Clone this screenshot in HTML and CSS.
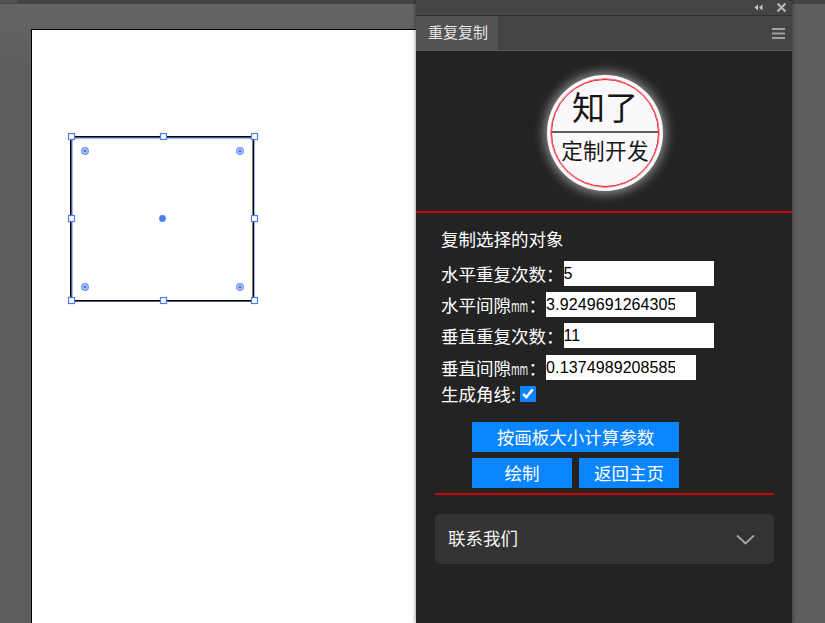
FILE: index.html
```html
<!DOCTYPE html>
<html lang="zh-CN">
<head>
<meta charset="utf-8">
<title>重复复制</title>
<link rel="stylesheet" href="styles.css">
</head>
<body>
<div class="app">
  <div class="appbar"><span class="appbar-tab"></span></div>
  <div class="workspace">
    <main class="canvas">
      <div class="artboard"></div>
      <svg class="selection" width="415" height="623" viewBox="0 0 415 623">
        <rect class="sel-blue" x="71.5" y="137.5" width="182" height="163"/>
        <rect class="sel-black" x="70.75" y="136.75" width="182.5" height="164"/>
        <g class="widget">
          <circle cx="85" cy="151" r="3.3"/><circle cx="240" cy="151" r="3.3"/>
          <circle cx="85" cy="287" r="3.3"/><circle cx="240" cy="287" r="3.3"/>
        </g>
        <g class="widget-dot">
          <circle cx="85" cy="151" r="1.8"/><circle cx="240" cy="151" r="1.8"/>
          <circle cx="85" cy="287" r="1.8"/><circle cx="240" cy="287" r="1.8"/>
          <circle cx="162.5" cy="218.5" r="3.4"/>
        </g>
        <g class="handle">
          <rect x="68.5" y="133.5" width="6" height="6"/><rect x="160.5" y="133.5" width="6" height="6"/><rect x="251.5" y="133.5" width="6" height="6"/>
          <rect x="68.5" y="215.5" width="6" height="6"/><rect x="251.5" y="215.5" width="6" height="6"/>
          <rect x="68.5" y="297.5" width="6" height="6"/><rect x="160.5" y="297.5" width="6" height="6"/><rect x="251.5" y="297.5" width="6" height="6"/>
        </g>
      </svg>
    </main>
    <aside class="panel">
      <div class="titlebar">
        <svg class="collapse" width="9" height="7" viewBox="0 0 9 7"><path d="M4 0.5v6L0.5 3.5zM8.5 0.5v6L5 3.5z"/></svg>
        <svg class="close" width="11" height="11" viewBox="0 0 11 11"><path d="M1.5 1.5l8 8M9.5 1.5l-8 8"/></svg>
      </div>
      <div class="tabbar">
        <div class="tab">重复复制</div>
        <svg class="menu" width="13" height="11" viewBox="0 0 13 11"><path d="M0 1h13M0 5.5h13M0 10h13"/></svg>
      </div>
      <div class="content">
        <header class="logo-area">
          <div class="logo">
            <div class="logo-ring">
              <div class="logo-top">知了</div>
              <div class="logo-bottom">定制开发</div>
            </div>
          </div>
        </header>
        <form class="form">
          <div class="form-title">复制选择的对象</div>
          <div class="row row-a"><label class="label">水平重复次数：</label><input class="field" type="text" value="5"></div>
          <div class="row row-b"><label class="label">水平间隙<span class="unit">mm</span>：</label><input class="field" type="text" value="3.92496912643051"></div>
          <div class="row row-c"><label class="label">垂直重复次数：</label><input class="field" type="text" value="11"></div>
          <div class="row row-d"><label class="label">垂直间隙<span class="unit">mm</span>：</label><input class="field" type="text" value="0.13749892085851"></div>
          <div class="row row-e"><label class="label">生成角线:</label><input class="check" type="checkbox" checked></div>
          <div class="actions">
            <button class="btn btn-wide" type="button">按画板大小计算参数</button>
            <div class="btn-pair">
              <button class="btn" type="button">绘制</button>
              <button class="btn" type="button">返回主页</button>
            </div>
          </div>
        </form>
        <div class="divider"></div>
        <div class="accordion">
          <span class="accordion-label">联系我们</span>
          <svg class="chevron" width="19" height="11" viewBox="0 0 19 11"><path d="M1 1.5l8.5 8 8.5-8"/></svg>
        </div>
      </div>
    </aside>
    <div class="gutter"></div>
  </div>
</div>
</body>
</html>
```
FILE: styles.css
```css
* { box-sizing: border-box; }
html, body { margin: 0; padding: 0; }
body {
  width: 825px;
  height: 623px;
  overflow: hidden;
  background: #5f5f5f;
  font-family: "Noto Sans CJK SC", "Liberation Sans", sans-serif;
}
.app { width: 825px; height: 623px; display: flex; flex-direction: column; position: relative; }
.appbar { height: 4px; background: #444; flex: none; }
.appbar-tab { display: block; width: 17px; height: 3px; background: #555; }
.workspace { flex: 1; display: flex; min-height: 0; }
.canvas { width: 416px; flex: none; position: relative; background: linear-gradient(#646464, #5e5e5e 60px); overflow: hidden; }
.artboard {
  position: absolute; left: 31px; top: 25px; width: 400px; height: 620px;
  background: #fff; border: 1px solid #000;
}
.selection { position: absolute; left: 0; top: -4px; }
.sel-blue { fill: none; stroke: #3f6fff; stroke-width: 1; transform: translate(0.5px, 0.5px); }
.sel-black { fill: none; stroke: #000; stroke-width: 1.5; }
.widget circle { fill: #d5e0ff; stroke: #6d90f7; stroke-width: 1.3; }
.widget-dot circle { fill: #4f7cf6; }
.handle rect { fill: #fff; stroke: #4f7cf6; stroke-width: 1.2; }

.panel {
  width: 376px; flex: none; margin-top: -4px; display: flex; flex-direction: column; position: relative;
  background: #232323; border-top-right-radius: 4px; overflow: hidden;
  box-shadow: 0 0 4px rgba(0, 0, 0, 0.5);
}
.titlebar { height: 16px; flex: none; background: #444; border-bottom: 1px solid #2f2f2f; display: flex; align-items: center; justify-content: flex-end; padding-right: 5px; gap: 13px; }
.collapse { fill: #c8c8c8; }
.close { stroke: #b4b4b4; stroke-width: 2.2; fill: none; margin-top: -1px; }
.tabbar { height: 35px; flex: none; background: #444; border-bottom: 1px solid #5a5a5a; display: flex; align-items: stretch; justify-content: space-between; }
.tab { width: 83px; background: #535353; border-right: 1px solid #3c3c3c; color: #e4e4e4; font-size: 15px; line-height: 31px; padding-left: 12px; }
.menu { stroke: #a0a0a0; stroke-width: 2; margin: 12px 7px 0 0; }

.content { flex: 1; display: flex; flex-direction: column; background: #232323; }
.logo-area { height: 162px; flex: none; border-bottom: 2px solid #d1030b; padding: 24px 0 0 131px; }
.logo { width: 116px; height: 116px; border-radius: 50%; background: #faf8fa; padding: 4px; box-shadow: 0 0 12px 2px rgba(255, 255, 255, 0.55); }
.logo-ring { width: 108px; height: 108px; border-radius: 50%; border: 1px solid #ee1c25; box-shadow: 0 0 0.6px 0.4px #ee1c25; display: flex; flex-direction: column; color: #161616; }
.logo-top { height: 53px; flex: none; border-bottom: 2px solid #5f5f5f; text-align: center; font-size: 33px; line-height: 52px; }
.logo-bottom { text-align: center; font-size: 21.6px; line-height: 33px; white-space: nowrap; letter-spacing: 0.3px; }

.form { display: flex; flex-direction: column; padding: 13px 0 0 25px; color: #fff; font-size: 17.5px; }
.form-title { height: 35px; line-height: 25px; }
.row { display: flex; align-items: center; height: 25px; }
.row-b, .row-c { margin-top: 6px; }
.row-d { margin-top: 7px; }
.row-e { margin-top: 1px; }
.label { white-space: nowrap; line-height: 25px; }
.unit { display: inline-block; font-size: 15px; transform: scaleX(0.62); transform-origin: left center; margin-right: -10.2px; }
.field {
  width: 150px; height: 25px; border: 0; border-radius: 0; background: #fff; color: #000;
  font-family: "Liberation Sans", sans-serif; font-size: 16px; letter-spacing: 0.1px; padding: 0 21px 0 0; outline: 0;
}
.check { width: 16px; height: 16px; margin: 0 0 0 4px; accent-color: #0a84ff; }
.actions { display: flex; flex-direction: column; gap: 6px; margin: 16px 0 0 31px; width: 207px; }
.btn { flex: 1; height: 30px; border: 0; border-radius: 0; background: #0a84ff; color: #fff; font-family: inherit; font-size: 17.5px; padding: 0; line-height: 30px; }
.btn-wide { flex: none; width: 207px; }
.btn-pair { display: flex; gap: 7px; }
.divider { height: 2px; background: #f00; margin: 5px 18px 0 19px; flex: none; transform: scaleY(0.75); }
.accordion {
  height: 50px; margin: 19px 18px 0 19px; padding: 0 19px 0 13px; flex: none;
  display: flex; align-items: center; justify-content: space-between;
  background: #333; border-radius: 5px; color: #f4f4f4; font-size: 17.5px;
}
.accordion-label { margin-bottom: 4px; }
.chevron { fill: none; stroke: #a8a8a8; stroke-width: 1.8; }
.gutter { flex: 1; background: #5f5f5f; }
```
